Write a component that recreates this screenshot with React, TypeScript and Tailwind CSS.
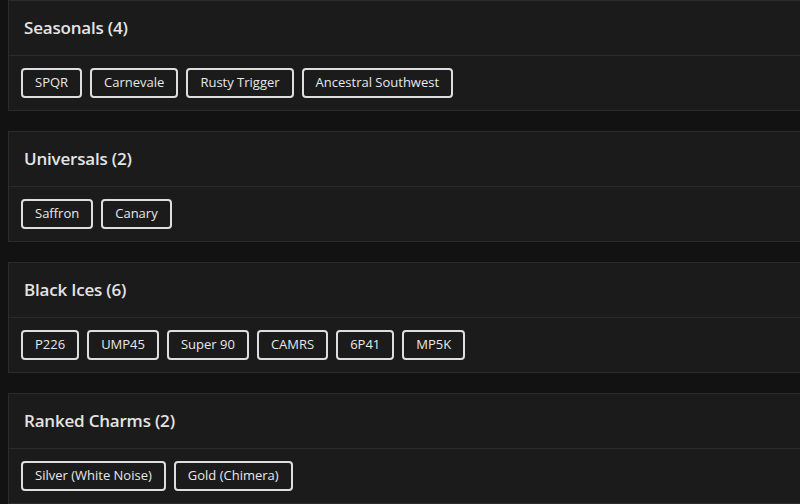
const sections = [
  { title: "Seasonals (4)", items: ["SPQR", "Carnevale", "Rusty Trigger", "Ancestral Southwest"] },
  { title: "Universals (2)", items: ["Saffron", "Canary"] },
  { title: "Black Ices (6)", items: ["P226", "UMP45", "Super 90", "CAMRS", "6P41", "MP5K"] },
  { title: "Ranked Charms (2)", items: ["Silver (White Noise)", "Gold (Chimera)"] },
];

export default function App() {
  return (
    <div className="w-[800px] h-[504px] overflow-hidden bg-[#121212] font-['Open_Sans',sans-serif]">
      <div className="w-[816px] pl-2 flex flex-col gap-5">
        {sections.map((s) => (
          <div key={s.title} className="bg-[#1b1b1b] border border-[#2b2b2b]">
            <div className="h-[55px] flex items-center px-[15px] border-b border-[#2b2b2b]">
              <h2 className="text-[17px] text-[#e4e4e4] font-semibold tracking-[-0.2px]">{s.title}</h2>
            </div>
            <div className="h-[54px] flex items-center gap-2 px-3">
              {s.items.map((it) => (
                <span
                  key={it}
                  className="h-[30px] flex items-center px-3 border-2 border-[#dedede] rounded-[4px] text-[13px] text-[#e8e8e8]"
                >
                  {it}
                </span>
              ))}
            </div>
          </div>
        ))}
      </div>
    </div>
  );
}
